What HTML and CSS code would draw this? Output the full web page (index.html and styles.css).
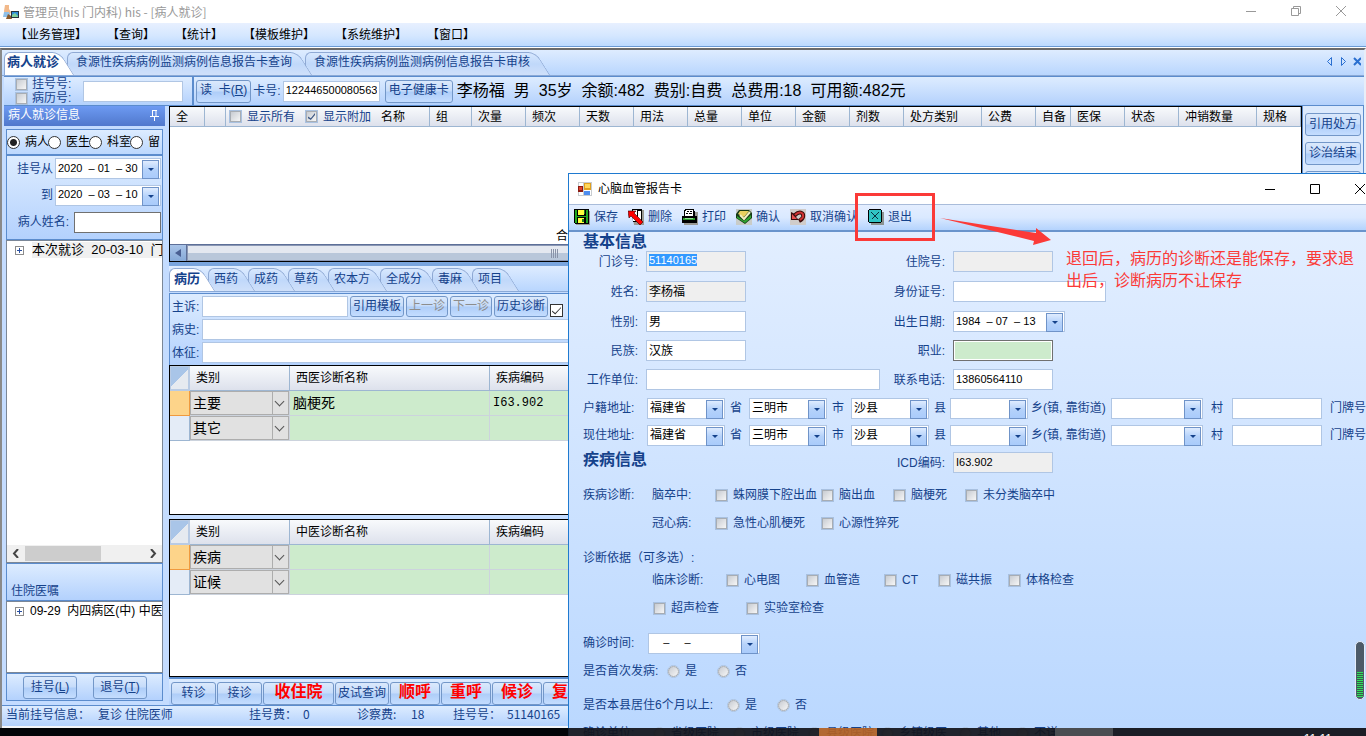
FILE: index.html
```html
<!DOCTYPE html>
<html lang="zh-CN">
<head>
    <meta charset="UTF-8">
    <meta name="viewport" content="width=device-width, initial-scale=1.0">
    <title>管理员(his 门内科) his - [病人就诊]</title>
    <link rel="stylesheet" href="styles.css">
</head>
<body>
<div class="app">
    <header class="titlebar">
        <svg class="app-icon" width="16" height="16" viewBox="0 0 16 16">
            <path d="M2 1h4v4l2 3-2 4H2l-1-5z" fill="#f2b98a"/>
            <path d="M1 8h5l2 5H0z" fill="#8fc0e8"/>
            <path d="M5 10l3 2 1 3H3z" fill="#8a5a2c"/>
            <path d="M8 7h8v7H8z" fill="#26323c"/>
            <path d="M9 8h6v5H9z" fill="#2f8fd8"/>
            <path d="M9 11l3-2 3 3v1H9z" fill="#7fce9c"/>
        </svg>
        <span class="title">管理员(his 门内科) his - [病人就诊]</span>
        <div class="win-controls muted">
            <button aria-label="最小化"><svg width="11" height="11"><path d="M0 5.5h10"/></svg></button>
            <button aria-label="还原"><svg width="11" height="11"><path d="M.5 2.5h7v7h-7zM2.5 2.5v-2h7v7h-2"/></svg></button>
            <button aria-label="关闭"><svg width="11" height="11"><path d="M0 0l10 10M10 0L0 10"/></svg></button>
        </div>
    </header>

    <nav class="menubar">
        <a href="#">【业务管理】</a>
        <a href="#">【查询】</a>
        <a href="#">【统计】</a>
        <a href="#">【模板维护】</a>
        <a href="#">【系统维护】</a>
        <a href="#">【窗口】</a>
    </nav>

    <div class="mdi">
        <div class="tabs page-tabs">
            <button class="tab active">病人就诊</button>
            <button class="tab">食源性疾病病例监测病例信息报告卡查询</button>
            <button class="tab">食源性疾病病例监测病例信息报告卡审核</button>
            <div class="tab-nav">
                <svg width="34" height="11" viewBox="0 0 34 11" fill="none" stroke="#2a6fd0">
                    <path d="M4.5 1.5v8L.5 5.5zM14.500 1.500v8l4-4z"/>
                    <path d="M27 2l7 7M34 2l-7 7" stroke-width="2"/>
                </svg>
            </div>
        </div>

        <!-- 读卡工具栏 -->
        <div class="card-bar">
            <div class="card-search">
                <div class="search-kind">
                    <label><input type="checkbox" class="box">挂号号:</label>
                    <label><input type="checkbox" class="box">病历号:</label>
                </div>
                <input type="text" class="field search-no" aria-label="号码">
            </div>
            <div class="card-info">
                <button class="btn">读&nbsp; 卡(<u>R</u>)</button>
                <label for="cardNo">卡号:</label>
                <input type="text" id="cardNo" class="field num" value="122446500080563423">
                <button class="btn">电子健康卡</button>
                <p class="patient">
                    <span>李杨福</span><span>男</span><span>35岁</span><span>余额:482</span><span>费别:自费</span><span>总费用:18</span><span>可用额:482元</span>
                </p>
            </div>
        </div>

        <div class="workspace">
            <aside class="sidebar">
                <div class="side-title">病人就诊信息
                    <svg width="9" height="11" viewBox="0 0 9 11" fill="none" stroke="#fff"><path d="M2.500 0v6M6 0v6M2 .5h5M0 6.500h9M4.500 7v4"/></svg>
                </div>
                <div class="side-radios">
                    <label><input type="radio" name="kind" class="dot" checked>病人</label>
                    <label><input type="radio" name="kind" class="dot">医生</label>
                    <label><input type="radio" name="kind" class="dot">科室</label>
                    <label><input type="radio" name="kind" class="dot">留</label>
                </div>
                <div class="side-form">
                    <label for="dateFrom">挂号从</label>
                    <span class="combo"><input type="text" id="dateFrom" class="field num" value="2020  – 01  – 30"></span>
                    <label for="dateTo">到</label>
                    <span class="combo"><input type="text" id="dateTo" class="field num" value="2020  – 03  – 10"></span>
                    <label for="patientName" class="wide">病人姓名:</label>
                    <input type="text" id="patientName" class="field dark">
                </div>
                <div class="tree visits">
                    <div class="tree-item"><button class="plus" aria-label="展开"></button><span class="picked">本次就诊&nbsp; 20-03-10&nbsp; 门</span></div>
                    <div class="tree-scroll">
                        <svg width="7" height="9"><path d="M6 0L2 4.500 6 9"/></svg>
                        <span class="thumb"></span>
                        <svg width="7" height="9"><path d="M1 0l4 4.500L1 9"/></svg>
                    </div>
                </div>
                <div class="side-label">住院医嘱</div>
                <div class="tree orders">
                    <div class="tree-item"><button class="plus" aria-label="展开"></button><span>09-29&nbsp; 内四病区(中) 中医</span></div>
                </div>
                <div class="side-buttons">
                    <button class="btn">挂号(<u>L</u>)</button>
                    <button class="btn">退号(<u>T</u>)</button>
                </div>
            </aside>

            <main class="main">
                <section class="rx">
                    <table class="rx-table">
                        <colgroup>
                            <col class="w35"><col class="w21"><col class="w204"><col class="w42">
                            <col class="w54"><col class="w54"><col class="w54"><col class="w54"><col class="w54"><col class="w54"><col class="w54"><col class="w54">
                            <col class="w78"><col class="w54"><col class="w35"><col class="w54"><col class="w54"><col class="w78"><col>
                        </colgroup>
                        <thead>
                            <tr>
                                <th>全</th><th></th>
                                <th class="name-col">
                                    <div class="name-tools">
                                        <label><input type="checkbox" class="box">显示所有</label>
                                        <label><input type="checkbox" class="box" checked>显示附加</label>
                                        <span>名称</span>
                                    </div>
                                </th>
                                <th>组</th><th>次量</th><th>频次</th><th>天数</th><th>用法</th><th>总量</th><th>单位</th><th>金额</th><th>剂数</th>
                                <th>处方类别</th><th>公费</th><th>自备</th><th>医保</th><th>状态</th><th>冲销数量</th><th>规格</th>
                            </tr>
                        </thead>
                    </table>
                    <div class="rx-total">合计</div>
                    <div class="rx-scroll"><button aria-label="向左"></button><span class="rx-thumb"></span></div>
                </section>

                <div class="tabs record-tabs">
                    <button class="tab active">病历</button>
                    <button class="tab">西药</button>
                    <button class="tab">成药</button>
                    <button class="tab">草药</button>
                    <button class="tab">农本方</button>
                    <button class="tab">全成分</button>
                    <button class="tab">毒麻</button>
                    <button class="tab">项目</button>
                </div>

                <div class="record-form">
                    <div class="record-row">
                        <label for="complaint">主诉:</label>
                        <input type="text" id="complaint" class="field complaint">
                        <button class="btn">引用模板</button>
                        <button class="btn" disabled>上一诊</button>
                        <button class="btn" disabled>下一诊</button>
                        <button class="btn">历史诊断</button>
                        <input type="checkbox" class="plain-check" checked aria-label="历史诊断">
                    </div>
                    <div class="record-row">
                        <label for="history">病史:</label>
                        <input type="text" id="history" class="field grow">
                    </div>
                    <div class="record-row">
                        <label for="signs">体征:</label>
                        <input type="text" id="signs" class="field grow">
                    </div>
                </div>

                <div class="diag west">
                    <table class="diag-table">
                        <colgroup><col class="w20"><col class="w100"><col class="w200"><col></colgroup>
                        <thead>
                            <tr><th class="corner"></th><th>类别</th><th>西医诊断名称</th><th>疾病编码</th></tr>
                        </thead>
                        <tbody>
                            <tr class="current"><td></td><td><span class="cell-select"><select aria-label="类别"><option>主要</option></select></span></td><td>脑梗死</td><td class="code">I63.902</td></tr>
                            <tr><td></td><td><span class="cell-select"><select aria-label="类别"><option>其它</option></select></span></td><td></td><td></td></tr>
                        </tbody>
                    </table>
                </div>
                <div class="diag tcm">
                    <table class="diag-table">
                        <colgroup><col class="w20"><col class="w100"><col class="w200"><col></colgroup>
                        <thead>
                            <tr><th class="corner"></th><th>类别</th><th>中医诊断名称</th><th>疾病编码</th></tr>
                        </thead>
                        <tbody>
                            <tr class="current"><td></td><td><span class="cell-select"><select aria-label="类别"><option>疾病</option></select></span></td><td></td><td></td></tr>
                            <tr><td></td><td><span class="cell-select"><select aria-label="类别"><option>证候</option></select></span></td><td></td><td></td></tr>
                        </tbody>
                    </table>
                </div>

                <div class="actions">
                    <button class="btn w45">转诊</button>
                    <button class="btn w45">接诊</button>
                    <button class="btn hot w70">收住院</button>
                    <button class="btn">皮试查询</button>
                    <button class="btn hot">顺呼</button>
                    <button class="btn hot">重呼</button>
                    <button class="btn hot">候诊</button>
                    <button class="btn hot">复诊</button>
                </div>
            </main>

            <aside class="rightbar">
                <button class="btn">引用处方</button>
                <button class="btn">诊治结束</button>
                <button class="btn">打印处方</button>
            </aside>
        </div>

        <footer class="statusbar">
            <span class="s-info">当前挂号信息：</span>
            <span class="s-type">复诊 住院医师</span>
            <span class="s-item">挂号费：</span>
            <span class="s-item">0</span>
            <span class="s-item">诊察费:</span>
            <span class="s-value">18</span>
            <span class="s-item">挂号号：</span>
            <span>51140165</span>
        </footer>
    </div>

    <div class="taskbar">
        <span class="task-left"></span>
        <span class="task-tint"></span>
        <span class="task-active"></span>
        <span class="task-tint"></span>
        <span class="task-item"></span>
        <span class="task-tray"><time>11:11</time></span>
    </div>
</div>

<!-- 心脑血管报告卡窗口 -->
<section class="dialog">
    <header class="dialog-title">
        <svg width="14" height="14" viewBox="0 0 14 14" shape-rendering="crispEdges">
            <path d="M0 0h14v14H0z" fill="#c8ccd0"/>
            <path d="M1 1h4v3H1zM6 8h7v5H6zM1 10h4v3H1z" fill="#fff"/>
            <path d="M6 1h7v7H6z" fill="#e0a020"/><path d="M7 2h5v4H7z" fill="#ffd75a"/>
            <path d="M0 4h5v6H0z" fill="#8c1a12"/><path d="M1 5h3v3H1z" fill="#e0452e"/>
            <path d="M6 9h6v4H6z" fill="#4d8df0"/>
        </svg>
        <span>心脑血管报告卡</span>
        <div class="win-controls">
            <button aria-label="最小化"><svg width="11" height="11"><path d="M0 5.500h10"/></svg></button>
            <button aria-label="最大化"><svg width="11" height="11"><path d="M.5.500h9v9h-9z"/></svg></button>
            <button aria-label="关闭"><svg width="11" height="11"><path d="M0 0l10 10M10 0L0 10"/></svg></button>
        </div>
    </header>

    <div class="dialog-tools">
        <button>
            <svg width="16" height="16" viewBox="0 0 16 16" shape-rendering="crispEdges">
                <path d="M2 2h14v14H2z" fill="#9a9a94"/><path d="M0 0h15v15H1l-1-1z" fill="#000"/>
                <path d="M1 1h13v13H1z" fill="#1fa81f"/><path d="M3 1h9v6H3zM3 8h9v6H3z" fill="#000"/>
                <path d="M4 1h6v5H4zM4 9h6v5H4z" fill="#ffff3c"/><path d="M10 1h1v4h-1zM8 10h2v3H8z" fill="#1f7a1f"/>
            </svg>保存</button>
        <button>
            <svg width="16" height="16" viewBox="0 0 16 16">
                <path d="M4 1h12v15H6z" fill="#9a9a94"/><path d="M4 0h10v13H5z" fill="#000"/>
                <path d="M5 1h4v11H5zM10 2h3v10h-3z" fill="#fff"/>
                <path d="M0 2h8L6 4l9 9-3 3-9-9-2 2z" fill="#f00" stroke="#300" stroke-width=".6"/>
            </svg>删除</button>
        <button>
            <svg width="16" height="16" viewBox="0 0 16 16" shape-rendering="crispEdges">
                <path d="M2 3h14v13H2z" fill="#9a9a94"/><path d="M3 0h9v2h1v5h2v7H0V7h2V2z" fill="#000"/>
                <path d="M4 1h7v6H3V4z" fill="#fff"/><path d="M5 2h2v1H5zM8 2h2v1H8zM4 4h2v1H4zM7 4h3v1H7z" fill="#000"/>
                <path d="M1 9h12v2H1z" fill="#2a9a2a"/><path d="M3 9h8v1H3z" fill="#8fe08f"/>
            </svg>打印</button>
        <button>
            <svg width="16" height="16" viewBox="0 0 16 16">
                <path d="M0 0h16v16H0z" fill="#c9ccc8"/><path d="M0 5l3-4h10l3 3v5l-7 6-9-6z" fill="#163a16"/>
                <path d="M2 5l2-3h9L8 8z" fill="#e8d060"/><path d="M1 7l7 5 7-6v3l-6 5-8-5z" fill="#2fa52f"/>
                <path d="M4 6l4 4 6-7" fill="none" stroke="#f4efc0" stroke-width="2"/>
            </svg>确认</button>
        <button>
            <svg width="16" height="16" viewBox="0 0 16 16">
                <path d="M0 0h16v16H0z" fill="#d0ccca"/>
                <path d="M5 6c4-4 9-3 8 2-.5 2-2 3-4 4" fill="none" stroke="#3a0d0d" stroke-width="4"/>
                <path d="M1 3v8h8L6 8l1-2-2-1z" fill="#3a0d0d"/>
                <path d="M5 6c4-4 9-3 8 2-.5 2-2 2-3 3" fill="none" stroke="#d03434" stroke-width="2"/>
                <path d="M2 5v5h5z" fill="#e85050"/>
            </svg>取消确认</button>
        <button>
            <svg width="16" height="16" viewBox="0 0 16 16" shape-rendering="crispEdges">
                <path d="M3 3h13v13H3z" fill="#8c9492"/><path d="M1 0h12v1h1v12h-1v1H1v-1H0V1h1z" fill="#000"/>
                <path d="M1 1h12v12H1z" fill="#30c4c4"/>
                <path d="M3.500 3.500l7 7M10.500 3.500l-7 7" stroke="#0a3040" fill="none"/>
            </svg>退出</button>
    </div>

    <form class="report">
        <h2 class="section-title">基本信息</h2>
        <div class="form-row tall">
            <label for="outNo">门诊号:</label><div><span class="field readonly w100 picked-box"><output id="outNo" class="selected">51140165</output></span></div>
            <label for="inNo">住院号:</label><input type="text" id="inNo" class="field w100" readonly>
        </div>
        <div class="form-row tall">
            <label for="fName">姓名:</label><input type="text" id="fName" class="field w100" value="李杨福" readonly>
            <label for="idNo">身份证号:</label><input type="text" id="idNo" class="field w153">
        </div>
        <div class="form-row">
            <label for="sex">性别:</label><input type="text" id="sex" class="field w100" value="男">
            <label for="birth">出生日期:</label><span class="combo w112"><input type="text" id="birth" class="field num" value="1984  – 07  – 13"></span>
        </div>
        <div class="form-row">
            <label for="nation">民族:</label><input type="text" id="nation" class="field w100" value="汉族">
            <label for="job">职业:</label><input type="text" id="job" class="field w100 required">
        </div>
        <div class="form-row">
            <label for="company">工作单位:</label><input type="text" id="company" class="field w234">
            <label for="phone">联系电话:</label><input type="text" id="phone" class="field num w100" value="13860564110">
        </div>
        <div class="address-row">
            <label for="p1">户籍地址:</label>
            <span class="combo"><select id="p1" class="field"><option>福建省</option></select></span><label for="p1">省</label>
            <span class="combo"><select id="c1" class="field"><option>三明市</option></select></span><label for="c1">市</label>
            <span class="combo"><select id="x1" class="field"><option>沙县</option></select></span><label for="x1">县</label>
            <span class="combo"><select id="t1" class="field"><option></option></select></span><label for="t1">乡(镇, 靠街道)</label>
            <span class="combo"><select id="v1" class="field"><option></option></select></span><label for="v1">村</label>
            <input type="text" id="n1" class="field"><label for="n1">门牌号</label>
        </div>
        <div class="address-row">
            <label for="p2">现住地址:</label>
            <span class="combo"><select id="p2" class="field"><option>福建省</option></select></span><label for="p2">省</label>
            <span class="combo"><select id="c2" class="field"><option>三明市</option></select></span><label for="c2">市</label>
            <span class="combo"><select id="x2" class="field"><option>沙县</option></select></span><label for="x2">县</label>
            <span class="combo"><select id="t2" class="field"><option></option></select></span><label for="t2">乡(镇, 靠街道)</label>
            <span class="combo"><select id="v2" class="field"><option></option></select></span><label for="v2">村</label>
            <input type="text" id="n2" class="field"><label for="n2">门牌号</label>
        </div>
        <div class="form-row icd-row">
            <h2 class="section-title">疾病信息</h2>
            <label for="icd">ICD编码:</label><input type="text" id="icd" class="field num w100" value="I63.902" readonly>
        </div>

        <div class="check-row disease">
            <span>疾病诊断:</span><span>脑卒中:</span>
            <label><input type="checkbox" class="box">蛛网膜下腔出血</label>
            <label><input type="checkbox" class="box">脑出血</label>
            <label><input type="checkbox" class="box">脑梗死</label>
            <label><input type="checkbox" class="box">未分类脑卒中</label>
        </div>
        <div class="check-row disease">
            <span></span><span>冠心病:</span>
            <label><input type="checkbox" class="box">急性心肌梗死</label>
            <label><input type="checkbox" class="box">心源性猝死</label>
        </div>
        <div class="basis-title">诊断依据（可多选）:</div>
        <div class="check-row clinical">
            <span></span><span>临床诊断:</span>
            <label><input type="checkbox" class="box">心电图</label>
            <label><input type="checkbox" class="box">血管造</label>
            <label><input type="checkbox" class="box">CT</label>
            <label><input type="checkbox" class="box">磁共振</label>
            <label><input type="checkbox" class="box">体格检查</label>
        </div>
        <div class="check-row lab">
            <span></span>
            <label><input type="checkbox" class="box">超声检查</label>
            <label><input type="checkbox" class="box">实验室检查</label>
        </div>
        <div class="check-row confirm">
            <label for="confirmDate">确诊时间:</label>
            <span class="combo w112"><input type="text" id="confirmDate" class="field num" value="    –     –"></span>
        </div>
        <div class="check-row first-time">
            <span>是否首次发病:</span>
            <label><input type="radio" name="first" class="ring">是</label>
            <label><input type="radio" name="first" class="ring">否</label>
        </div>
        <div class="check-row resident">
            <span>是否本县居住6个月以上:</span>
            <label><input type="radio" name="resident" class="ring">是</label>
            <label><input type="radio" name="resident" class="ring">否</label>
        </div>
        <div class="check-row unit">
            <span>确诊单位:</span>
            <label><input type="radio" name="unit" class="ring">省级医院</label>
            <label><input type="radio" name="unit" class="ring">市级医院</label>
            <label><input type="radio" name="unit" class="ring">县级医院</label>
            <label><input type="radio" name="unit" class="ring">乡镇级医</label>
            <label><input type="radio" name="unit" class="ring">其他</label>
            <label><input type="radio" name="unit" class="ring">不详</label>
        </div>
    </form>
</section>

<!-- 批注 -->
<div class="mark-box"></div>
<svg class="mark-arrow" width="112" height="30" viewBox="0 0 112 30"><path d="M0 0L96 15 96 10 111 22 93 27 94 23z" fill="#fb3a38"/></svg>
<p class="mark-text">退回后，病历的诊断还是能保存，要求退出后，诊断病历不让保存</p>
<div class="meter"><span></span></div>
</body>
</html>
```
FILE: styles.css
```css
* {
    box-sizing: border-box;
}
body {
    margin: 0;
    overflow: hidden;
    font-family: "Liberation Sans", "Noto Sans CJK SC", sans-serif;
    font-size: 12px;
    line-height: 16px;
    color: #15428b;
    white-space: nowrap;
}
button, input, select {
    font: inherit;
    color: inherit;
    margin: 0;
    padding: 0;
}
h2, p {
    margin: 0;
}
.app {
    display: flex;
    flex-direction: column;
    height: 100vh;
    overflow: hidden;
}

/* 标题栏和菜单 */
.titlebar {
    display: flex;
    align-items: center;
    height: 23px;
    padding-left: 3px;
    background: #fff;
    color: #999;
    flex: none;
}
.title {
    margin-left: 4px;
    font-family: "Noto Sans CJK SC", sans-serif;
}
.win-controls {
    display: flex;
    margin-left: auto;
}
.win-controls button {
    width: 45px;
    height: 20px;
    border: 0;
    background: none;
    display: flex;
    align-items: center;
    justify-content: center;
}
.win-controls svg {
    fill: none;
    stroke: #000;
}
.win-controls.muted {
    margin-right: 2px;
}
.win-controls.muted svg {
    stroke: #999;
}
.menubar {
    display: flex;
    align-items: center;
    gap: 20px;
    height: 24px;
    padding-left: 15px;
    background: linear-gradient(#e8f0ff, #d5e7ff 55%, #bcdaff);
    border-bottom: 1px solid #6a9ad4;
    flex: none;
}
.menubar a {
    color: #000;
    text-decoration: none;
}

/* 页面区域 */
.mdi {
    flex: 1;
    min-height: 0;
    display: flex;
    flex-direction: column;
    margin-top: 1px;
    border-top: 2px solid #6b6b6b;
    border-left: 2px solid #8a8a8a;
    border-right: 2px solid #e8eef8;
    background: #c4dcff;
}
.tabs {
    display: flex;
    align-items: flex-end;
    isolation: isolate;
    background: linear-gradient(#deecff, #b9d6fe);
    border-bottom: 1px solid #8aa9d6;
    flex: none;
}
.page-tabs {
    height: 26px;
    padding-left: 2px;
}
.tab {
    position: relative;
    height: 23px;
    padding: 0 13px 4px 9px;
    border: 0;
    background: none;
    z-index: 1;
}
.tab::before, .tab::after {
    content: "";
    position: absolute;
    z-index: -1;
    top: 0;
    bottom: 0;
    background: linear-gradient(#d8e8fe, #c0d8fa 50%, #cfe0fa);
    border-top: 1px solid #8fa9d4;
}
.tab::before {
    left: 0;
    right: 14px;
    border-left: 1px solid #8fa9d4;
    border-radius: 6px 0 0 0;
}
.tab::after {
    right: 0;
    width: 24px;
    border-right: 1px solid #8fa9d4;
    border-radius: 0 8px 0 0;
    transform: skewX(32deg);
}
/* 左边的标签压住右边的标签 */
.tab:nth-child(1) { z-index: 8; }
.tab:nth-child(2) { z-index: 7; }
.tab:nth-child(3) { z-index: 6; }
.tab:nth-child(4) { z-index: 5; }
.tab:nth-child(5) { z-index: 4; }
.tab:nth-child(6) { z-index: 3; }
.tab:nth-child(7) { z-index: 2; }
.tab.active {
    padding-left: 3px;
    padding-right: 8px;
    font-size: 13px;
    font-weight: bold;
}
.tab.active::before, .tab.active::after {
    background: #fff;
}
.tab-nav {
    margin-left: auto;
    padding: 0 3px 4px 0;
}

/* 读卡工具栏 */
.card-bar {
    display: flex;
    height: 30px;
    margin-left: 2px;
    border-top: 1px solid #5b8ccd;
    border-bottom: 1px solid #5b8ccd;
    background: linear-gradient(#ddecff, #c9dffe 50%, #b3d1fc);
    flex: none;
}
.card-search {
    display: flex;
    align-items: center;
    width: 190px;
    padding-left: 11px;
    border-right: 2px solid #5b8ccd;
}
.search-kind {
    display: flex;
    flex-direction: column;
    width: 68px;
}
.search-kind label {
    display: flex;
    align-items: center;
    gap: 4px;
    height: 14px;
}
.card-info {
    display: flex;
    align-items: center;
    gap: 2px;
    padding-left: 2px;
}
.card-info .num {
    width: 97px;
    margin-right: 3px;
}
.search-no {
    width: 100px;
}
.patient {
    display: flex;
    gap: 9px;
    padding-left: 2px;
    font-size: 16px;
    line-height: 20px;
    color: #000;
}
.btn {
    height: 23px;
    padding: 0 3px 2px;
    border: 1px solid #7397c8;
    border-radius: 3px;
    background: linear-gradient(#dbe9fc, #c6dcfa 48%, #aecdf8 52%, #c4ddff);
    white-space: nowrap;
    flex: none;
}
.btn:disabled {
    color: #8d8d8d;
}
.field {
    height: 21px;
    padding: 0 2px 2px;
    border: 1px solid #b0c6e4;
    border-radius: 0;
    background: #fff;
    color: #000;
    outline: none;
    min-width: 0;
}
.field.num {
    font-size: 11px;
}
.field:read-only:not(select), .field.readonly {
    background: #efefef;
}
.field.dark {
    border-color: #707070;
}

/* 复选框和单选框 */
.box, .ring {
    appearance: none;
    flex: none;
    width: 13px;
    height: 13px;
    border: 1px solid #a9c1e0;
    background: #f4f6f8;
    display: grid;
    place-items: center;
}
.box::before, .ring::before {
    content: "";
    width: 9px;
    height: 9px;
    border: 1px solid #a8adb3;
    background: linear-gradient(135deg, #c8ccd2, #f6f6f6);
    grid-area: 1 / 1;
}
.box:checked::after {
    content: "";
    width: 7px;
    height: 7px;
    background: #3f5a86;
    clip-path: polygon(0 50%, 40% 75%, 100% 0, 100% 30%, 40% 100%, 0 75%);
    grid-area: 1 / 1;
    z-index: 1;
}
.ring, .ring::before {
    border-radius: 50%;
}
.dot {
    appearance: none;
    flex: none;
    width: 13px;
    height: 13px;
    border: 1px solid #333;
    border-radius: 50%;
    background: #fff;
}
.dot:checked {
    background: radial-gradient(circle, #222 0 3px, #fff 4px);
}
.plain-check {
    appearance: none;
    width: 13px;
    height: 13px;
    border: 1px solid #333;
    background: #fff;
    display: grid;
    place-items: center;
    align-self: flex-end;
}
.plain-check::after {
    content: "";
    width: 9px;
    height: 8px;
    background: #333;
    clip-path: polygon(0 50%, 35% 80%, 100% 5%, 100% 20%, 35% 100%, 0 65%);
}

/* 下拉框 */
.combo {
    position: relative;
    display: inline-flex;
    height: 21px;
}
.combo .field {
    appearance: none;
    width: 100%;
}
.combo::before {
    content: "";
    position: absolute;
    right: 2px;
    top: 2px;
    width: 15px;
    height: 17px;
    border: 1px solid #6f93c8;
    background: linear-gradient(#dfecff, #b5d2fa 50%, #a9cbfb);
    pointer-events: none;
}
.combo::after {
    content: "";
    position: absolute;
    right: 7px;
    top: 10px;
    border: solid transparent;
    border-width: 3px 3px 0;
    border-top-color: #15428b;
    pointer-events: none;
}

/* 左侧栏 */
.workspace {
    flex: 1;
    min-height: 0;
    display: flex;
}
.sidebar {
    width: 163px;
    margin-right: 4px;
    padding: 0 2px 4px 4px;
    display: flex;
    flex-direction: column;
    background: #c4dcff;
    flex: none;
}
.side-title {
    display: flex;
    align-items: center;
    justify-content: space-between;
    height: 20px;
    margin: 0 -2px 3px;
    padding: 0 6px 2px 4px;
    background: linear-gradient(#6d9af2, #5078cc);
    color: #fff;
    flex: none;
}
.side-radios {
    display: flex;
    height: 27px;
    border: 1px solid #5b8ccd;
    border-bottom-width: 2px;
    background: linear-gradient(#ddecff, #bcd8fe);
    overflow: hidden;
    flex: none;
}
.side-radios label {
    display: flex;
    align-items: center;
    gap: 5px;
    width: 41px;
    flex: none;
    color: #000;
}
.side-form {
    display: grid;
    grid-template-columns: 48px 18px 87px;
    gap: 5px 0;
    align-items: center;
    height: 84px;
    padding: 2px 1px 6px;
    border: 1px solid #5b8ccd;
    border-top: 0;
    background: linear-gradient(#ddecff, #b3d1fd);
    flex: none;
}
.side-form label {
    grid-column: 1;
    text-align: right;
    padding-right: 3px;
}
.side-form .combo {
    grid-column: 2 / 4;
    margin-left: -1px;
}
.side-form .wide {
    grid-column: 1 / 3;
    padding-right: 5px;
}
.tree {
    display: flex;
    flex-direction: column;
    justify-content: space-between;
    border: 1px solid #7b8797;
    background: #fff;
    color: #000;
    overflow: hidden;
}
.visits {
    flex: 1;
}
.tree-item {
    display: flex;
    align-items: center;
    gap: 6px;
    height: 18px;
    padding-left: 8px;
    overflow: hidden;
}
.visits .tree-item {
    gap: 8px;
    font-size: 13px;
}
.picked {
    background: #f0f0f0;
}
.plus {
    width: 9px;
    height: 9px;
    border: 1px solid #8c8c8c;
    background: linear-gradient(#2a50a0, #2a50a0) center / 5px 1px no-repeat, linear-gradient(#2a50a0, #2a50a0) center / 1px 5px no-repeat, #fff;
    flex: none;
}
.tree-scroll {
    display: flex;
    align-items: center;
    gap: 6px;
    height: 17px;
    padding: 0 5px;
    background: #f0f0f0;
}
.tree-scroll svg {
    fill: none;
    stroke: #444;
    stroke-width: 2;
}
.tree-scroll .thumb {
    width: 76px;
    height: 15px;
    margin-right: auto;
    background: #cdcdcd;
}
.side-label {
    height: 38px;
    padding: 19px 0 0 4px;
    border: 1px solid #5b8ccd;
    background: linear-gradient(#ddecff, #b3d1fd);
    flex: none;
}
.orders {
    height: 72px;
    flex: none;
}
.side-buttons {
    display: flex;
    gap: 16px;
    height: 28px;
    padding: 2px 0 0 16px;
    border: 1px solid #5b8ccd;
    background: linear-gradient(#ddecff, #b3d1fd);
    flex: none;
}
.side-buttons .btn {
    width: 54px;
}

/* 处方表 */
.main {
    flex: 1;
    min-width: 0;
    display: flex;
    flex-direction: column;
}
.rx {
    display: flex;
    flex-direction: column;
    height: 156px;
    border: 1px solid #000;
    background: #fff;
    color: #000;
    flex: none;
}
.rx-table, .diag-table {
    width: 100%;
    table-layout: fixed;
    border-collapse: separate;
    border-spacing: 0;
}
.rx-table th {
    height: 20px;
    padding: 0 0 0 6px;
    border-right: 1px solid #9db6d2;
    border-bottom: 1px solid #9db6d2;
    background: linear-gradient(#f8fafc, #dde1ec);
    font-weight: normal;
    text-align: left;
    overflow: hidden;
}
.rx-table .name-col {
    padding-left: 3px;
}
.name-tools {
    display: flex;
    align-items: center;
}
.name-tools label {
    display: flex;
    align-items: center;
    gap: 5px;
    width: 76px;
    color: #15428b;
}
.rx-total {
    flex: 1;
    display: flex;
    align-items: flex-end;
    justify-content: flex-start;
    padding-left: 386px;
}
.rx-scroll {
    display: flex;
    height: 17px;
    border-top: 1px solid #5d6f98;
    background: #d5dcea;
}
.rx-scroll button {
    width: 17px;
    border: 0;
    border-right: 1px solid #5d6f98;
    background: linear-gradient(#a9c4e8, #86a9d8);
    display: grid;
    place-items: center;
}
.rx-scroll button::after {
    content: "";
    border: solid transparent;
    border-width: 4px 6px 4px 0;
    border-right-color: #4a5f92;
}
.rx-thumb {
    width: 65%;
    border: 1px solid #8a97b4;
    background: repeating-linear-gradient(90deg, #8a93a8 0 1px, transparent 1px 2px) center / 8px 9px no-repeat, linear-gradient(#e4e8f0 48%, #b9c7da 52%);
}
.record-tabs {
    height: 30px;
    border-top: 4px solid #7aa5de;
}
.record-tabs .tab {
    padding: 0 10px 2px 6px;
}
.record-tabs .tab.active {
    padding: 0 8px 2px 5px;
}

/* 病历录入 */
.record-form {
    display: flex;
    flex-direction: column;
    gap: 2px;
    margin-top: 1px;
    padding: 2px 0 2px 2px;
    border-top: 1px solid #5b8ccd;
    border-left: 1px solid #5b8ccd;
    background: linear-gradient(#ddecff, #b3d1fd);
    flex: none;
}
.record-row {
    display: flex;
    align-items: center;
    gap: 2px;
}
.record-row label {
    width: 28px;
}
.record-row .btn, .actions .btn {
    padding-left: 2px;
    padding-right: 2px;
}
.record-row .btn {
    height: 21px;
}
.complaint {
    width: 146px;
}
.grow {
    flex: 1;
}

/* 诊断表 */
.diag {
    border: 1px solid #000;
    background: #fff;
    color: #000;
    overflow: hidden;
}
.west {
    height: 150px;
    margin-bottom: 4px;
    flex: none;
}
.tcm {
    flex: 1;
}
.diag-table th {
    height: 25px;
    padding: 0 0 0 6px;
    border-right: 1px solid #9db6d2;
    border-bottom: 1px solid #9db6d2;
    background: linear-gradient(#f8fafc, #dde1ec);
    font-weight: normal;
    text-align: left;
}
.diag-table .corner {
    border: 2px solid #b9cbe4;
    border-width: 1px 2px 2px 1px;
    background: linear-gradient(135deg, #a9c5e8 50%, #e6eaf0 50%);
}
.diag-table td {
    height: 25px;
    padding: 0 0 0 3px;
    border-right: 1px solid #ccd3dd;
    border-bottom: 1px solid #ccd3dd;
    background: #cdebcc;
    font-size: 14px;
}
.diag-table td:first-child {
    background: #e4ecf7;
    border-color: #9db6d2;
}
.diag-table .current td:first-child {
    background: #fdd48a;
    border-color: #f09a3e;
}
.diag-table td:nth-child(2) {
    padding: 0;
    background: #e1e1e1;
}
.diag-table .code {
    font-family: "Liberation Mono", monospace;
    font-size: 12px;
}
.cell-select {
    position: relative;
    display: flex;
}
.cell-select select {
    appearance: none;
    width: 100%;
    height: 24px;
    padding-left: 2px;
    border: 1px solid #adadad;
    border-radius: 0;
    background: #e1e1e1;
}
.cell-select::before {
    content: "";
    position: absolute;
    top: 1px;
    bottom: 1px;
    right: 16px;
    border-left: 1px solid #adadad;
}
.cell-select::after {
    content: "";
    position: absolute;
    right: 6px;
    top: 7px;
    width: 6px;
    height: 6px;
    border: solid #555;
    border-width: 0 1px 1px 0;
    transform: rotate(45deg);
}
.actions {
    display: flex;
    gap: 1px;
    height: 28px;
    padding: 3px 0 0 2px;
    border-top: 2px solid #5b8ccd;
    background: linear-gradient(#ddecff, #b3d1fd);
    overflow: hidden;
    flex: none;
}
.actions .hot {
    width: 50px;
    padding: 0 0 4px;
    font-size: 16px;
    font-weight: bold;
    color: #f00;
}
.actions .w70 {
    width: 71px;
}
.rightbar {
    display: flex;
    flex-direction: column;
    gap: 6px;
    padding: 7px 2px 0;
    border-left: 1px solid #5b8ccd;
    border-right: 1px solid #5b8ccd;
    background: #dceafd;
    flex: none;
}
.statusbar {
    display: flex;
    align-items: center;
    height: 23px;
    padding: 0 0 4px 4px;
    border-top: 1px solid #5b8ccd;
    border-bottom: 2px solid #f4f6fa;
    background: linear-gradient(#ddecff, #b3d1fd);
    font-family: "Noto Sans CJK SC", sans-serif;
    flex: none;
}
.s-info {
    width: 92px;
}
.s-type {
    width: 151px;
}
.s-item {
    width: 54px;
}
.s-value {
    width: 42px;
}

/* 任务栏 */
.taskbar {
    position: relative;
    z-index: 5;
    display: flex;
    height: 8px;
    flex: none;
}
.task-left {
    width: 568px;
    background: #020408;
}
.task-tint {
    flex: 0 1 251px;
    background: rgba(18, 20, 26, .92);
}
.task-active {
    width: 58px;
    background: rgba(178, 96, 34, .92);
}
.task-active + .task-tint {
    flex-basis: 178px;
}
.task-item {
    width: 58px;
    background: #4a4d51;
}
.task-tray {
    flex: 1;
    display: flex;
    justify-content: flex-end;
    padding: 3px 34px 0 0;
    background: #1b1e26;
    color: #fff;
    overflow: hidden;
}

/* 报告卡窗口 */
.dialog {
    position: absolute;
    left: 568px;
    right: 0;
    top: 173px;
    bottom: 0;
    z-index: 3;
    display: flex;
    flex-direction: column;
    border-left: 1px solid #1f7ad0;
    border-top: 1px solid #1f7ad0;
    background: #fff;
    overflow: hidden;
}
.dialog-title {
    display: flex;
    align-items: center;
    gap: 6px;
    height: 30px;
    padding-left: 9px;
    color: #000;
    flex: none;
}
.dialog-title .win-controls {
    margin-right: -17px;
}
.dialog-tools {
    display: flex;
    height: 28px;
    border-top: 1px solid #a9bcda;
    border-bottom: 2px solid #6a94cc;
    background: linear-gradient(#e4eeff, #dae9ff 50%, #b4d3fd);
    flex: none;
}
.dialog-tools button {
    display: flex;
    align-items: center;
    gap: 4px;
    padding: 0 5px 2px;
    border: 0;
    background: none;
    flex: none;
}
.report {
    flex: 1;
    padding-left: 14px;
    background: linear-gradient(#e2eeff, #b9d7ff);
}
.section-title {
    height: 19px;
    font-size: 16px;
    line-height: 19px;
}
.form-row {
    display: grid;
    grid-template-columns: 63px 234px 73px 1fr;
    align-items: start;
    height: 29px;
}
.form-row.tall {
    height: 30px;
}
.form-row label {
    padding: 3px 8px 0 0;
    text-align: right;
}
.icd-row .section-title {
    grid-column: 1 / 3;
    line-height: 16px;
}
.picked-box {
    display: block;
}
.selected {
    background: #3399ff;
    color: #fff;
    font-size: 11px;
}
.required {
    border-color: #707070;
    background: #cdebcc;
    box-shadow: inset 0 0 0 1px #fff;
}
.address-row {
    display: grid;
    grid-template-columns: 64px 78px 24px 78px 24px 78px 21px 78px 83px 92px 29px 90px auto;
    align-items: start;
    height: 27px;
}
.address-row label {
    padding: 2px 0 0 5px;
}
.address-row label:first-child {
    padding-left: 0;
}
.address-row label:nth-of-type(5) {
    padding-left: 3px;
}
.address-row label:nth-of-type(6), .address-row label:nth-of-type(7) {
    padding-left: 8px;
}
.check-row {
    display: grid;
    align-items: center;
    height: 28px;
}
.check-row label {
    display: flex;
    align-items: center;
    gap: 5px;
}
.disease {
    grid-template-columns: 69px 63px 106px 72px 72px auto;
}
.basis-title {
    height: 16px;
    margin-top: 13px;
}
.clinical {
    grid-template-columns: 69px 74px 80px 78px 54px 70px auto;
}
.lab {
    grid-template-columns: 70px 93px auto;
}
.confirm {
    grid-template-columns: 65px auto;
    margin-top: 7px;
}
.first-time {
    grid-template-columns: 84px 50px auto;
}
.resident {
    grid-template-columns: 144px 50px auto;
    margin-top: 6px;
}
.unit {
    grid-template-columns: 70px 80px 75px 73px 78px 57px auto;
}

/* 宽度 */
.w20 { width: 20px; }
.w21 { width: 21px; }
.w35 { width: 35px; }
.w42 { width: 42px; }
.w45 { width: 45px; }
.w54 { width: 54px; }
.w78 { width: 78px; }
.w100 { width: 100px; }
.w112 { width: 112px; }
.w153 { width: 153px; }
.w200 { width: 200px; }
.w204 { width: 204px; }
.w234 { width: 234px; }

/* 批注 */
.mark-box {
    position: absolute;
    left: 855px;
    top: 193px;
    width: 80px;
    height: 48px;
    border: 3px solid #fb3a38;
    z-index: 4;
}
.mark-arrow {
    position: absolute;
    left: 940px;
    top: 218px;
    z-index: 4;
}
.mark-text {
    position: absolute;
    left: 1066px;
    top: 246px;
    width: 290px;
    z-index: 4;
    font-family: "Noto Sans CJK SC", sans-serif;
    font-size: 16px;
    line-height: 22px;
    color: #fb3a38;
    white-space: normal;
}
.meter {
    position: absolute;
    right: 1px;
    top: 641px;
    width: 10px;
    height: 59px;
    padding: 30px 1px 2px;
    border: 1px solid #e4edfa;
    border-radius: 5px;
    background: #4c5a68;
    z-index: 6;
}
.meter span {
    display: block;
    height: 100%;
    background: repeating-linear-gradient(#2ee05a 0 1px, #3a5a50 1px 2px);
}
```
